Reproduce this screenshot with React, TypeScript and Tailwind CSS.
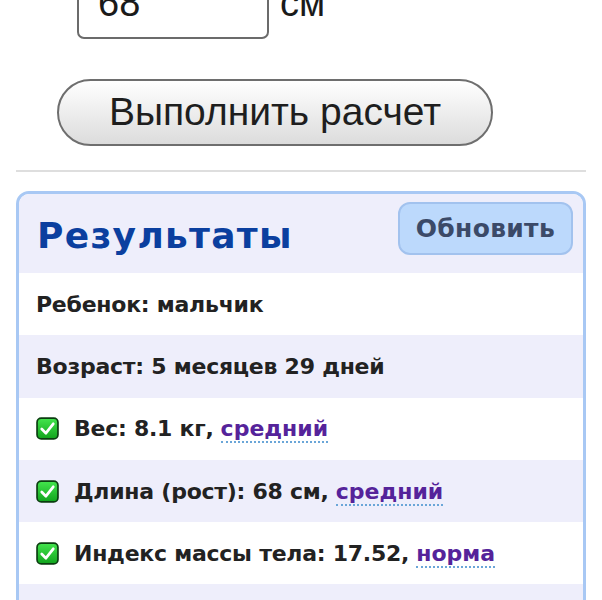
import React from "react";

function Check() {
  return (
    <svg width="23" height="23" viewBox="0 0 22 22" className="shrink-0">
      <defs>
        <linearGradient id="g" x1="0" y1="0" x2="0" y2="1">
          <stop offset="0" stopColor="#44e64e" />
          <stop offset="1" stopColor="#10a31c" />
        </linearGradient>
      </defs>
      <rect x="1" y="1" width="20" height="20" rx="4" fill="url(#g)" stroke="#0b3d10" strokeWidth="1.6" />
      <path d="M5.5 11.5 L9.5 15.5 L16.5 6.5" fill="none" stroke="#fff" strokeWidth="2.6" strokeLinecap="round" strokeLinejoin="round" />
    </svg>
  );
}

function Link({ children }: { children: React.ReactNode }) {
  return (
    <span className="text-[#55239a] border-b-2 border-dotted border-[#6aa6d8] leading-[1.1]">{children}</span>
  );
}

export default function App() {
  const rows: { text: React.ReactNode; check?: boolean; link?: string }[] = [
    { text: "Ребенок: мальчик" },
    { text: "Возраст: 5 месяцев 29 дней" },
    { text: "Вес: 8.1 кг,", check: true, link: "средний" },
    { text: "Длина (рост): 68 см,", check: true, link: "средний" },
    { text: "Индекс массы тела: 17.52,", check: true, link: "норма" },
    { text: "" },
  ];
  return (
    <div className="w-[602px] h-[600px] overflow-hidden bg-white font-['Liberation_Sans',Arial,sans-serif] text-[#222]">
      <div className="flex items-end pl-[77px] -mt-[41px]">
        <div className="w-[192px] h-[80px] border-2 border-[#6b6b6b] rounded-[7px] flex items-end pb-[15px] pl-[19px] text-[38px] leading-none text-[#1a1a1a]">
          68
        </div>
        <div className="pl-[11px] pb-[17px] text-[38px] leading-none text-[#1a1a1a]">см</div>
      </div>
      <div className="pl-[57px] pt-[40px]">
        <div className="w-[436px] h-[67px] rounded-full border-2 border-[#6e6e6e] bg-gradient-to-b from-[#ffffff] to-[#dcdcdc] flex items-center justify-center text-[39px] text-[#1e1e1e]">
          Выполнить расчет
        </div>
      </div>
      <div className="mx-[16px] mt-[24px] h-[2px] bg-[#dedede]" />
      <div className="mx-[16px] mt-[19px] border-[3px] border-[#a8c8f4] rounded-[13px] overflow-hidden font-['DejaVu_Sans',sans-serif] font-bold">
        <div className="bg-[#eeeefb] h-[79px] flex items-start justify-between pl-[18px] pr-[10px]">
          <div className="text-[36px] leading-none text-[#0b3f9f] pt-[24px] tracking-[1.3px]">Результаты</div>
          <div className="mt-[8px] h-[53px] px-[16px] rounded-[12px] bg-[#bcd9fc] border-2 border-[#a2c2ee] flex items-center text-[25px] tracking-[0.3px] text-[#3b4a68]">
            Обновить
          </div>
        </div>
        {rows.map((r, i) => (
          <div
            key={i}
            className={`h-[62.3px] flex items-center pl-[17px] text-[22px] ${i % 2 === 0 ? "bg-white" : "bg-[#eeeefb]"}`}
          >
            {r.check && (
              <span className="mr-[15px] flex">
                <Check />
              </span>
            )}
            <span className="tracking-[-0.25px]">{r.text}</span>
            {r.link && (
              <span className="ml-[7px]">
                <Link>{r.link}</Link>
              </span>
            )}
          </div>
        ))}
      </div>
    </div>
  );
}
